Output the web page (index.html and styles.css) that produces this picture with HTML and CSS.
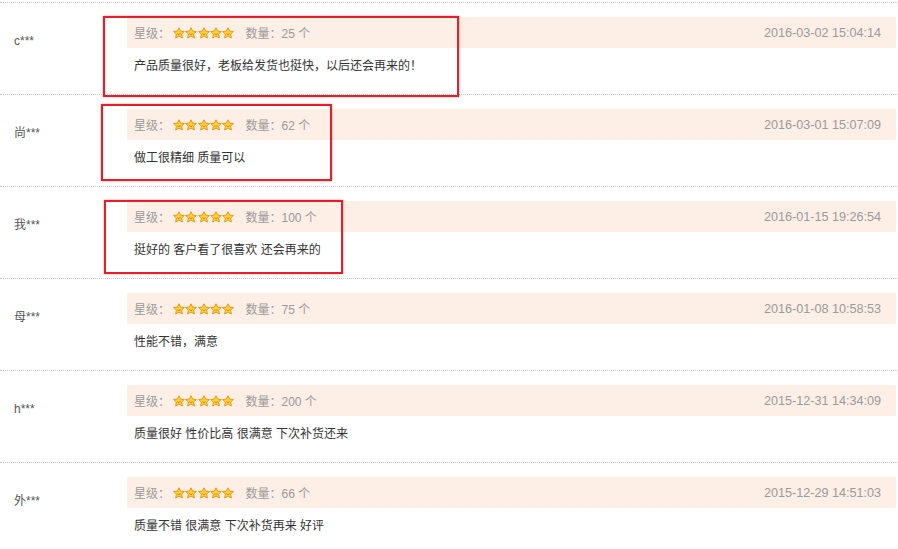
FILE: index.html
```html
<!DOCTYPE html>
<html lang="zh-CN">
<head>
  <meta charset="UTF-8">
  <title>评价列表</title>
  <link rel="stylesheet" href="styles.css">
</head>
<body>
  <svg class="defs" width="0" height="0">
    <symbol id="star" viewBox="0 0 12 12">
      <polygon points="6,0.8 7.6,4.1 11.4,4.5 8.6,7.1 9.4,11 6,9.1 2.6,11 3.4,7.1 0.6,4.5 4.4,4.1" fill="#ffd23a" stroke="#e7900c" stroke-width="0.9" stroke-linejoin="round"/>
      <path d="M4.4 6.7 Q6 8.4 7.6 6.7" fill="none" stroke="#c46a00" stroke-width="0.8"/>
    </symbol>
  </svg>

  <div class="reviews">
    <div class="review">
      <div class="user">c***</div>
      <div class="content">
        <div class="meta">
          <span class="label">星级：</span>
          <span class="stars"><svg><use href="#star"/></svg><svg><use href="#star"/></svg><svg><use href="#star"/></svg><svg><use href="#star"/></svg><svg><use href="#star"/></svg></span>
          <span class="qty">数量：25 个</span>
          <span class="date">2016-03-02 15:04:14</span>
        </div>
        <div class="comment">产品质量很好，老板给发货也挺快，以后还会再来的！</div>
      </div>
    </div>

    <div class="review">
      <div class="user">尚***</div>
      <div class="content">
        <div class="meta">
          <span class="label">星级：</span>
          <span class="stars"><svg><use href="#star"/></svg><svg><use href="#star"/></svg><svg><use href="#star"/></svg><svg><use href="#star"/></svg><svg><use href="#star"/></svg></span>
          <span class="qty">数量：62 个</span>
          <span class="date">2016-03-01 15:07:09</span>
        </div>
        <div class="comment">做工很精细 质量可以</div>
      </div>
    </div>

    <div class="review">
      <div class="user">我***</div>
      <div class="content">
        <div class="meta">
          <span class="label">星级：</span>
          <span class="stars"><svg><use href="#star"/></svg><svg><use href="#star"/></svg><svg><use href="#star"/></svg><svg><use href="#star"/></svg><svg><use href="#star"/></svg></span>
          <span class="qty">数量：100 个</span>
          <span class="date">2016-01-15 19:26:54</span>
        </div>
        <div class="comment">挺好的 客户看了很喜欢 还会再来的</div>
      </div>
    </div>

    <div class="review">
      <div class="user">母***</div>
      <div class="content">
        <div class="meta">
          <span class="label">星级：</span>
          <span class="stars"><svg><use href="#star"/></svg><svg><use href="#star"/></svg><svg><use href="#star"/></svg><svg><use href="#star"/></svg><svg><use href="#star"/></svg></span>
          <span class="qty">数量：75 个</span>
          <span class="date">2016-01-08 10:58:53</span>
        </div>
        <div class="comment">性能不错，满意</div>
      </div>
    </div>

    <div class="review">
      <div class="user">h***</div>
      <div class="content">
        <div class="meta">
          <span class="label">星级：</span>
          <span class="stars"><svg><use href="#star"/></svg><svg><use href="#star"/></svg><svg><use href="#star"/></svg><svg><use href="#star"/></svg><svg><use href="#star"/></svg></span>
          <span class="qty">数量：200 个</span>
          <span class="date">2015-12-31 14:34:09</span>
        </div>
        <div class="comment">质量很好 性价比高 很满意 下次补货还来</div>
      </div>
    </div>

    <div class="review">
      <div class="user">外***</div>
      <div class="content">
        <div class="meta">
          <span class="label">星级：</span>
          <span class="stars"><svg><use href="#star"/></svg><svg><use href="#star"/></svg><svg><use href="#star"/></svg><svg><use href="#star"/></svg><svg><use href="#star"/></svg></span>
          <span class="qty">数量：66 个</span>
          <span class="date">2015-12-29 14:51:03</span>
        </div>
        <div class="comment">质量不错 很满意 下次补货再来 好评</div>
      </div>
    </div>

    <!-- highlight marks drawn over the first three reviews -->
    <div class="mark mark-1"></div>
    <div class="mark mark-2"></div>
    <div class="mark mark-3"></div>
  </div>
</body>
</html>
```

FILE: styles.css
```css
body {
  margin: 0;
  padding-top: 2px;
  background: #fff;
  font-family: "Liberation Sans", "Noto Sans CJK SC", sans-serif;
  font-size: 12px;
  color: #333;
}
.defs {
  position: absolute;
}
.reviews {
  position: relative;
  border-top: 1px dotted #cacaca;
}
.review {
  display: flex;
  height: 91px;
  border-bottom: 1px dotted #cacaca;
}
.user {
  width: 113px;
  padding: 29px 0 0 14px;
  line-height: 18px;
  color: #555;
}
.content {
  flex: 1;
  margin-right: 2px;
}
.meta {
  display: flex;
  align-items: center;
  height: 31px;
  margin-top: 14px;
  padding: 0 15px 0 7px;
  background: #fdeee6;
  color: #9a9a9a;
}
.stars {
  display: flex;
  margin: 0 11px 0 3px;
}
.stars svg {
  width: 12px;
  height: 12px;
  margin-right: 0.3px;
}
.qty {
  flex: 1;
}
.date {
  font-size: 12.6px;
  color: #9a9a9a;
}
.comment {
  margin-top: 9px;
  padding-left: 7px;
  line-height: 18px;
  color: #333;
}
.mark {
  position: absolute;
  border: 2px solid #e3202a;
  box-shadow: 0 0 2px rgba(227, 32, 42, 0.5);
}
.mark-1 {
  left: 103px;
  top: 13px;
  width: 352px;
  height: 77px;
}
.mark-2 {
  left: 101px;
  top: 101px;
  width: 227px;
  height: 73px;
}
.mark-3 {
  left: 104px;
  top: 197px;
  width: 235px;
  height: 70px;
}
```
